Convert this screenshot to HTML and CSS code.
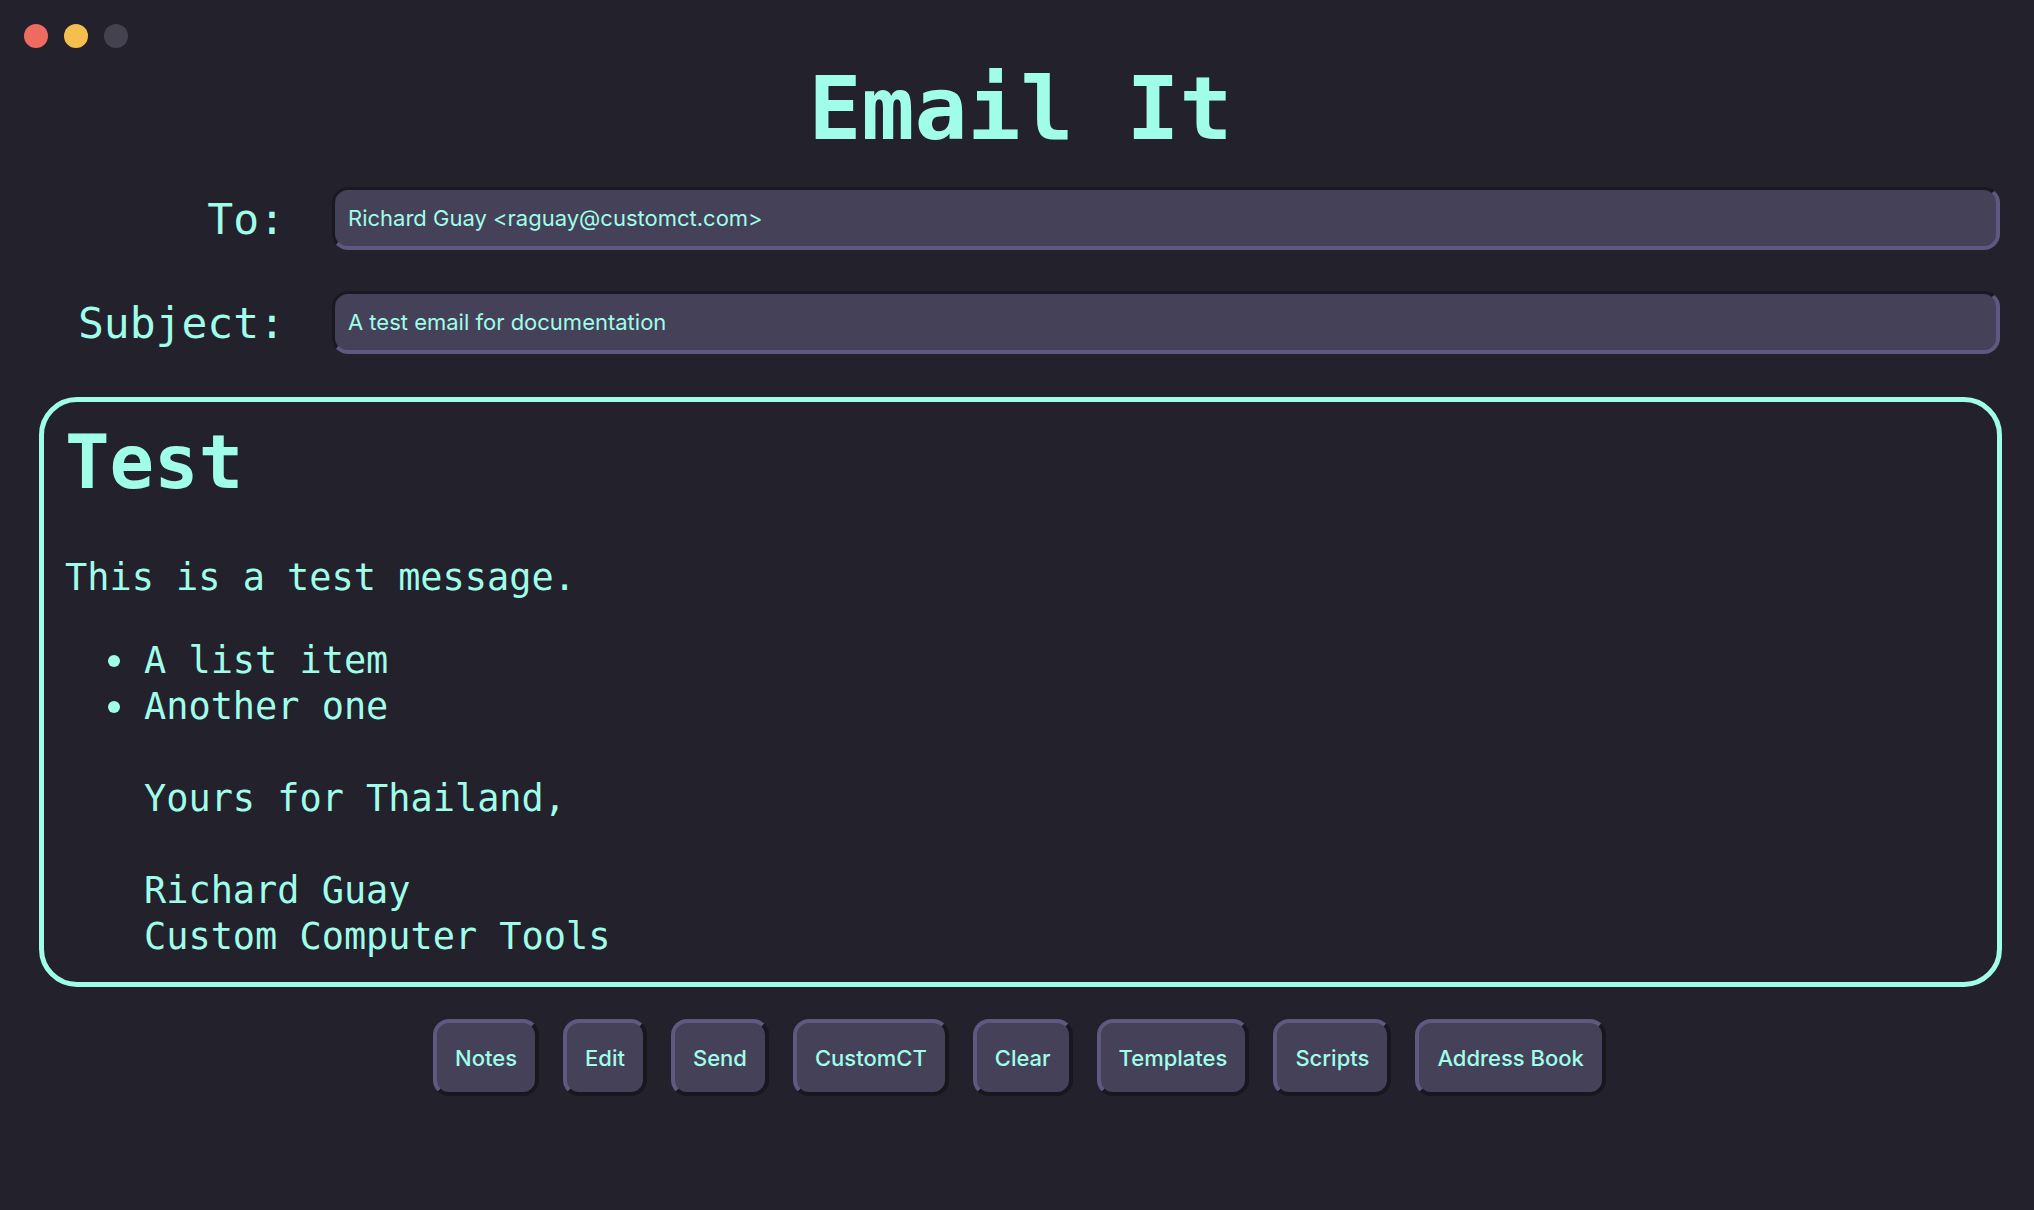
FILE: index.html
```html
<!DOCTYPE html>
<html lang="en">
<head>
<meta charset="utf-8">
<title>Email It</title>
<link rel="stylesheet" href="styles.css">
</head>
<body>
<div class="app">
  <div class="lights">
    <span class="light red"></span>
    <span class="light yellow"></span>
    <span class="light gray"></span>
  </div>
  <h1 class="title">Email It</h1>
  <div class="form-row">
    <div class="label">To:</div>
    <div class="field">Richard Guay &lt;raguay@customct.com&gt;</div>
  </div>
  <div class="form-row second">
    <div class="label">Subject:</div>
    <div class="field">A test email for documentation</div>
  </div>
  <div class="editor">
    <h2 class="heading">Test</h2>
    <p class="para">This is a test message.</p>
    <ul class="list">
      <li>A list item</li>
      <li>Another one</li>
    </ul>
    <div class="signature">
      <div class="line">Yours for Thailand,</div>
      <div class="line blank"></div>
      <div class="line">Richard Guay</div>
      <div class="line">Custom Computer Tools</div>
    </div>
  </div>
  <div class="buttons">
    <button class="btn">Notes</button>
    <button class="btn">Edit</button>
    <button class="btn">Send</button>
    <button class="btn">CustomCT</button>
    <button class="btn">Clear</button>
    <button class="btn">Templates</button>
    <button class="btn">Scripts</button>
    <button class="btn">Address Book</button>
  </div>
</div>
</body>
</html>
```

FILE: styles.css
```css
html, body {
  margin: 0;
  padding: 0;
  background: #22212c;
}

.app {
  box-sizing: border-box;
  width: 2034px;
  height: 1210px;
  padding: 24px 32px 0 39px;
  background: #22212c;
  color: #a0fde9;
  font-family: "DejaVu Sans Mono", monospace;
}

.lights {
  display: flex;
  gap: 16px;
  height: 24px;
  margin-left: -15px;
}

.light {
  width: 24px;
  height: 24px;
  border-radius: 50%;
}

.red { background: #ee6b60; }
.yellow { background: #f5bf4f; }
.gray { background: #44424e; }

.title {
  margin: 17px 0 0 0;
  font-family: "DejaVu Sans Mono", monospace;
  font-weight: bold;
  font-size: 88px;
  line-height: 88px;
  text-align: center;
  color: #a0fde9;
}

.form-row {
  display: flex;
  align-items: center;
  gap: 47px;
  margin-top: 34px;
  padding-right: 2px;
}

.form-row.second {
  margin-top: 41px;
}

.label {
  width: 246px;
  flex: none;
  text-align: right;
  font-size: 43px;
  line-height: 46px;
}

.field {
  flex: 1;
  box-sizing: border-box;
  height: 63px;
  display: flex;
  align-items: center;
  padding: 0 14px 0 13px;
  background: #454158;
  border-style: solid;
  border-width: 3px 4px 4px 3px;
  border-color: #1a1921 #5d5980 #5d5980 #1a1921;
  border-radius: 16px;
  font-family: Inter, "Liberation Sans", sans-serif;
  font-size: 22px;
  color: #a0fde9;
}

.editor {
  margin-top: 43px;
  border: 5px solid #a0fde9;
  border-radius: 38px;
  padding: 22px 20px 22px 21px;
  font-size: 36.9px;
  line-height: 46px;
}

.heading {
  margin: 0;
  font-family: "DejaVu Sans Mono", monospace;
  font-weight: bold;
  font-size: 74px;
  line-height: 76px;
}

.para {
  margin: 55px 0 0 0;
}

.list {
  margin: 37px 0 0 0;
  padding-left: 79px;
  list-style: none;
}

.list li {
  display: flex;
  align-items: center;
}

.list li::before {
  content: "";
  flex: none;
  width: 12px;
  height: 12px;
  border-radius: 50%;
  background: #a0fde9;
  margin-left: -36px;
  margin-right: 24px;
}

.signature {
  margin-top: 46px;
  padding-left: 79px;
}

.line {
  height: 46px;
  white-space: pre;
}

.buttons {
  display: flex;
  justify-content: center;
  gap: 24px;
  margin-top: 32px;
  padding-right: 2px;
}

.btn {
  box-sizing: border-box;
  height: 77px;
  padding: 0 18px;
  background: #454158;
  border-style: solid;
  border-width: 4px;
  border-color: #5d5980 #18171e #18171e #5d5980;
  border-radius: 16px;
  font-family: Inter, "Liberation Sans", sans-serif;
  font-size: 22px;
  font-weight: 500;
  color: #a0fde9;
}
```
